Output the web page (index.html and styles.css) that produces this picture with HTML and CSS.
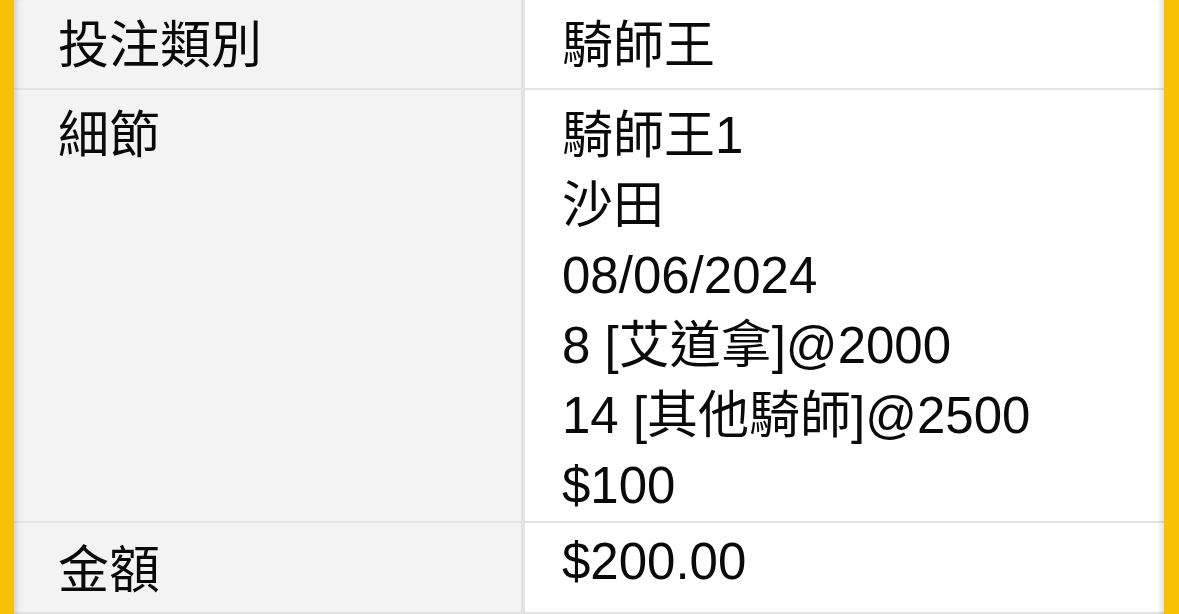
FILE: index.html
```html
<!DOCTYPE html>
<html lang="zh-Hant">
<head>
<meta charset="utf-8">
<link rel="stylesheet" href="styles.css">
</head>
<body>
<div class="frame">
  <div class="sheet">
    <div class="row row-type">
      <div class="label">投注類別</div>
      <div class="value">騎師王</div>
    </div>
    <div class="row row-detail">
      <div class="label">細節</div>
      <div class="value">
        <div>騎師王1</div>
        <div>沙田</div>
        <div>08/06/2024</div>
        <div>8 [艾道拿]@2000</div>
        <div>14 [其他騎師]@2500</div>
        <div>$100</div>
      </div>
    </div>
    <div class="row row-amount">
      <div class="label">金額</div>
      <div class="value">$200.00</div>
    </div>
  </div>
</div>
</body>
</html>
```
FILE: styles.css
```css
html, body {
  margin: 0;
  padding: 0;
  height: 100%;
}
body {
  background: #f9c103;
  font-family: "Liberation Sans", "Noto Sans CJK TC", sans-serif;
  color: #0a0a0a;
  overflow: hidden;
}
.frame {
  margin: 0 15px 0 14px;
  height: 614px;
  position: relative;
  background: #ffffff;
}
.frame::after {
  content: "";
  position: absolute;
  inset: 0;
  pointer-events: none;
  box-shadow: inset 7px 0 6px -5px rgba(0, 0, 0, 0.16),
              inset -7px 0 6px -5px rgba(0, 0, 0, 0.16);
}
.sheet {
  display: flex;
  flex-direction: column;
}
.row {
  display: grid;
  grid-template-columns: 507px 1fr;
  border-bottom: 2px solid #e4e4e4;
  font-size: 51px;
  line-height: 70px;
}
.label {
  background: #f3f3f3;
  padding-left: 44px;
}
.value {
  background: #ffffff;
  border-left: 4px solid #e2e2e2;
  padding-left: 37px;
}
.row-type {
  height: 88px;
}
.row-type .label,
.row-type .value {
  padding-top: 11px;
}
.row-detail {
  height: 431px;
}
.row-detail .label,
.row-detail .value {
  padding-top: 11px;
}
.row-amount {
  height: 89px;
}
.row-amount .label {
  padding-top: 13px;
}
.row-amount .value {
  padding-top: 4px;
}
```
